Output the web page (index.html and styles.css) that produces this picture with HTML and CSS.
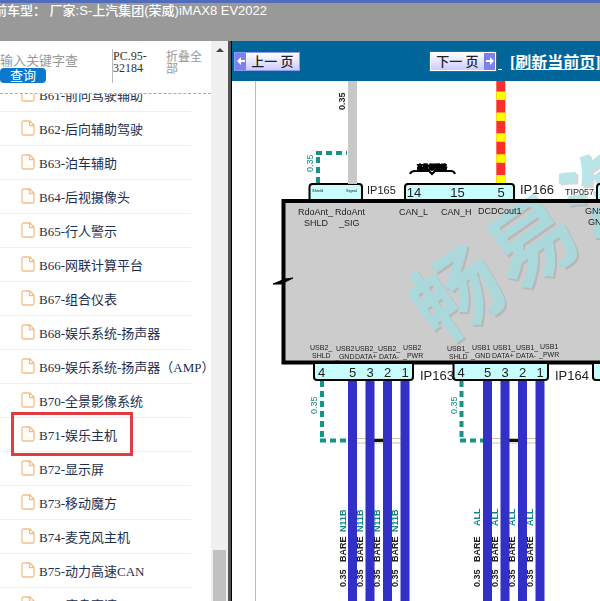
FILE: index.html
```html
<!DOCTYPE html>
<html lang="zh-CN">
<head>
<meta charset="utf-8">
<title>电路图</title>
<link rel="stylesheet" href="styles.css">
</head>
<body>
<svg class="defs" aria-hidden="true">
  <symbol id="doc" viewBox="0 0 14 16"><path d="M1 2.5Q1 1 2.5 1H9L13 5V13.5Q13 15 11.500 15H2.500Q1 15 1 13.500ZM8.500 1V5.500H13" fill="none" stroke="#f5bd85" stroke-width="1.300"/></symbol>
</svg>
<header class="top">前车型： 厂家:S-上汽集团(荣威)iMAX8 EV2022</header>
<div class="body">
  <aside class="side">
    <div class="panel">
      <form class="search">
        <div class="query">
          <input class="key" type="text" placeholder="输入关键字查" aria-label="关键字">
          <button class="go" type="button">查询</button>
        </div>
        <div class="code">PC.95-32184</div>
        <a class="fold" href="#">折叠全部</a>
      </form>
      <ul class="tree">
        <li><a href="#"><svg><use href="#doc"/></svg>B61-前向驾驶辅助</a></li>
        <li><a href="#"><svg><use href="#doc"/></svg>B62-后向辅助驾驶</a></li>
        <li><a href="#"><svg><use href="#doc"/></svg>B63-泊车辅助</a></li>
        <li><a href="#"><svg><use href="#doc"/></svg>B64-后视摄像头</a></li>
        <li><a href="#"><svg><use href="#doc"/></svg>B65-行人警示</a></li>
        <li><a href="#"><svg><use href="#doc"/></svg>B66-网联计算平台</a></li>
        <li><a href="#"><svg><use href="#doc"/></svg>B67-组合仪表</a></li>
        <li><a href="#"><svg><use href="#doc"/></svg>B68-娱乐系统-扬声器</a></li>
        <li><a href="#"><svg><use href="#doc"/></svg>B69-娱乐系统-扬声器（AMP）</a></li>
        <li><a href="#"><svg><use href="#doc"/></svg>B70-全景影像系统</a></li>
        <li class="marked"><a href="#"><svg><use href="#doc"/></svg>B71-娱乐主机</a></li>
        <li><a href="#"><svg><use href="#doc"/></svg>B72-显示屏</a></li>
        <li><a href="#"><svg><use href="#doc"/></svg>B73-移动魔方</a></li>
        <li><a href="#"><svg><use href="#doc"/></svg>B74-麦克风主机</a></li>
        <li><a href="#"><svg><use href="#doc"/></svg>B75-动力高速CAN</a></li>
        <li><a href="#"><svg><use href="#doc"/></svg>B76-底盘高速CAN</a></li>
      </ul>
    </div>
    <div class="bar"><i class="up"></i><i class="thumb"></i></div>
  </aside>
  <main class="main">
    <nav class="tools">
      <button class="page" type="button"><span class="arrow"><svg viewBox="0 0 8 8"><path d="M0 4L4 0V3H8V5H4V8Z"/></svg></span><span class="label">上一 页</span></button>
      <button class="page next" type="button"><span class="label">下一 页</span><span class="arrow"><svg viewBox="0 0 8 8"><path d="M8 4L4 0V3H0V5H4V8Z"/></svg></span></button>
      <i class="dash"></i>
      <a class="reload" href="#">[刷新当前页]</a>
    </nav>
    <svg class="diagram" viewBox="232 81 368 520" preserveAspectRatio="xMinYMin slice">
      <path d="M255.500 81V601" stroke="#bbb"/>
      <rect x="283.500" y="201" width="400" height="161.500" fill="#ccc"/>
      <g class="mark">
        <text class="shade" transform="translate(459 296) rotate(-35)" dy="32">畅</text>
        <text class="shade" transform="translate(534 244) rotate(-35)" dy="32">易</text>
        <text class="shade" transform="translate(610 192) rotate(-35)" dy="32">汽</text>
        <text transform="translate(457 294) rotate(-35)" dy="32">畅</text>
        <text transform="translate(532 242) rotate(-35)" dy="32">易</text>
        <text transform="translate(608 190) rotate(-35)" dy="32">汽</text>
      </g>
      <rect x="283.500" y="201" width="400" height="161.500" fill="none" stroke="#000" stroke-width="4"/>
      <path d="M273 284L285 279L293 278L281 284Z" fill="#000" stroke="#000"/>

      <g class="plug">
        <path d="M309.500 199V187Q309.500 184 312.500 184H359Q362 184 362 187V199"/>
        <path d="M405 199V187Q405 184 408 184H511Q514 184 514 187V199"/>
        <path d="M597 199V187Q597 184 600 184H620V199"/>
        <path d="M314 364V377Q314 380 317 380H410Q413 380 413 377V364"/>
        <path d="M453.500 364V377Q453.500 380 456.500 380H545Q548 380 548 377V364"/>
        <path d="M593 364V377Q593 380 596 380H620V364"/>
      </g>

      <path d="M352.500 81V184" stroke="#c8c8c8" stroke-width="9"/>
      <path d="M500.800 81V183" stroke="#fb302c" stroke-width="9"/>
      <path d="M500.800 91.500V183" stroke="#ffff00" stroke-width="9" stroke-dasharray="8.500 12.400"/>
      <g class="shield">
        <path d="M318 183V153"/>
        <path d="M316 153H347"/>
        <path d="M322 381V441"/>
        <path d="M320 440.500H349"/>
        <path d="M461.500 381V441"/>
        <path d="M460 440.500H484"/>
      </g>
      <g stroke="#c9c4a0" fill="none">
        <path d="M357 438.500H401M357 443H401M492 438.500H536M492 443H536"/>
        <path d="M373 440.500H384M508 440.500H519" stroke="#111" stroke-width="3"/>
      </g>
      <path class="wire" d="M352.500 381V601M370 381V601M387.500 381V601M405 381V601M487.500 381V601M505 381V601M522.500 381V601M540 381V601"/>
      <path d="M410 174Q411 171 415 171H429L432 174L435 171H451Q454 171 455 174" fill="none" stroke="#000" stroke-width="2"/>
      <text class="tiny bold" x="417" y="169">高数据链路</text>

      <g class="name">
        <text class="near" x="367" y="194">IP165</text>
        <text x="520" y="194">IP166</text>
        <text x="420" y="380">IP163</text>
        <text x="555" y="380">IP164</text>
        <text class="pin" x="565" y="195">TIP057</text>
      </g>
      <g class="num">
        <text x="414" y="197">14</text><text x="457.500" y="197">15</text><text x="501" y="197">5</text>
        <text x="321.500" y="377">4</text><text x="352.500" y="377">5</text><text x="370" y="377">3</text><text x="387.500" y="377">2</text><text x="405" y="377">1</text>
        <text x="461" y="377">4</text><text x="487.500" y="377">5</text><text x="505" y="377">3</text><text x="522.500" y="377">2</text><text x="540" y="377">1</text>
      </g>
      <g class="pin">
        <text x="298" y="215">RdoAnt_</text><text x="304" y="226">SHLD</text>
        <text x="335" y="215">RdoAnt</text><text x="339" y="226">_SIG</text>
        <text x="399" y="215">CAN_L</text><text x="441" y="215">CAN_H</text><text x="478" y="214">DCDCout1</text>
        <text x="585" y="214">GNSS</text><text x="588" y="225">GND</text>
      </g>
      <g class="small">
        <text x="310" y="350">USB2_</text><text x="312" y="358">SHLD</text>
        <text x="336" y="351">USB2</text><text x="335" y="359">_GND</text>
        <text x="355" y="351">USB2_</text><text x="355" y="359">DATA+</text>
        <text x="378" y="351">USB2_</text><text x="379" y="359">DATA-</text>
        <text x="403" y="350">USB2</text><text x="403" y="358">_PWR</text>
        <text x="447" y="351">USB1_</text><text x="449" y="359">SHLD</text>
        <text x="472" y="350">USB1</text><text x="471" y="358">_GND</text>
        <text x="493" y="350">USB1_</text><text x="492" y="358">DATA+</text>
        <text x="516" y="350">USB1_</text><text x="516" y="358">DATA-</text>
        <text x="540" y="349">USB1</text><text x="539" y="357">_PWR</text>
      </g>
      <text class="tiny" x="312" y="192">Shield</text><text class="tiny" x="346" y="192">Signal</text>

      <g class="gauge">
        <text class="bold" transform="translate(345 110) rotate(-90)">0.35</text>
        <text class="teal" transform="translate(313 172) rotate(-90)">0.35</text>
        <text class="teal" transform="translate(317 414) rotate(-90)">0.35</text>
        <text class="teal" transform="translate(457 414) rotate(-90)">0.35</text>
      </g>
      <g class="gauge bold">
        <text transform="translate(346 587) rotate(-90)">0.35</text><text transform="translate(346 562) rotate(-90)">BARE</text><text class="teal" transform="translate(346 532) rotate(-90)">N11B</text>
        <text transform="translate(363 587) rotate(-90)">0.35</text><text transform="translate(363 562) rotate(-90)">BARE</text><text class="teal" transform="translate(363 532) rotate(-90)">N11B</text>
        <text transform="translate(380 587) rotate(-90)">0.35</text><text transform="translate(380 562) rotate(-90)">BARE</text><text class="teal" transform="translate(380 532) rotate(-90)">N11B</text>
        <text transform="translate(398 587) rotate(-90)">0.35</text><text transform="translate(398 562) rotate(-90)">BARE</text><text class="teal" transform="translate(398 532) rotate(-90)">N11B</text>
        <text transform="translate(480 587) rotate(-90)">0.35</text><text transform="translate(480 562) rotate(-90)">BARE</text><text class="teal" transform="translate(480 526) rotate(-90)">ALL</text>
        <text transform="translate(498 587) rotate(-90)">0.35</text><text transform="translate(498 562) rotate(-90)">BARE</text><text class="teal" transform="translate(498 526) rotate(-90)">ALL</text>
        <text transform="translate(515 587) rotate(-90)">0.35</text><text transform="translate(515 562) rotate(-90)">BARE</text><text class="teal" transform="translate(515 526) rotate(-90)">ALL</text>
        <text transform="translate(533 587) rotate(-90)">0.35</text><text transform="translate(533 562) rotate(-90)">BARE</text><text class="teal" transform="translate(533 526) rotate(-90)">ALL</text>
      </g>
    </svg>
  </main>
</div>
</body>
</html>
```
FILE: styles.css
```css
*, *::before, *::after { box-sizing: border-box; }
body {
  margin: 0;
  height: 100vh;
  display: flex;
  flex-direction: column;
  overflow: hidden;
  background: #fff;
  font-family: "Liberation Serif", "Noto Sans CJK SC", serif;
  font-size: 13px;
}
a { color: inherit; text-decoration: none; }
button, input { font: inherit; border: 0; padding: 0; }
.defs { display: none; }

.top {
  flex: none;
  height: 41px;
  border-top: 3px solid #4f6dbb;
  background: #999;
  color: #fff;
  font: 500 13px/15px "Liberation Sans", "Noto Sans CJK SC", sans-serif;
  text-indent: -6px;
  white-space: nowrap;
}

.body { flex: 1; min-height: 0; display: flex; }

.side {
  flex: none;
  width: 231px;
  display: flex;
  border-right: 3px solid #555;
  background: #fff;
}
.panel {
  flex: 1;
  min-width: 0;
  display: flex;
  flex-direction: column;
}
.search {
  flex: none;
  height: 53px;
  display: flex;
  align-items: flex-start;
  padding-top: 8px;
  border-bottom: 1px dashed #aaa;
}
.query {
  width: 112px;
  padding-top: 4px;
  display: flex;
  flex-direction: column;
  align-items: flex-start;
}
.key { width: 80px; height: 15px; background: none; color: #333; }
.key::placeholder { color: #999; }
.go {
  width: 46px;
  height: 15px;
  border-radius: 4px;
  background: #0a78cc;
  color: #fff;
  line-height: 15px;
}
.code {
  width: 54px;
  height: 34px;
  padding-top: 1px;
  border-left: 1px solid #bbb;
  color: #333;
  font-size: 12px;
  line-height: 12px;
  overflow-wrap: anywhere;
}
.fold { width: 40px; padding-top: 2px; color: #999; font-size: 12px; line-height: 12px; }

.tree {
  flex: 1;
  min-height: 0;
  margin: 0;
  padding: 0;
  list-style: none;
  display: flex;
  flex-direction: column;
  overflow: hidden;
}
.tree li {
  position: relative;
  flex: none;
  width: 191px;
  height: 34px;
  border-bottom: 1px solid #eee;
}
.tree li:first-child { margin-top: -16px; }
.tree a {
  display: flex;
  align-items: center;
  gap: 4px;
  height: 32px;
  padding-left: 21px;
  color: #1c2f50;
  white-space: nowrap;
}
.tree svg { width: 14px; height: 16px; flex: none; }
.marked::after {
  content: "";
  position: absolute;
  left: 11px;
  top: -6px;
  width: 122px;
  height: 44px;
  z-index: 1;
  border: 3px solid #e13c40;
}

.bar {
  width: 17px;
  flex: none;
  display: flex;
  flex-direction: column;
  justify-content: space-between;
  align-items: center;
  padding-top: 7px;
  background: #f0f0f0;
}
.up {
  border: 4px solid transparent;
  border-top: 0;
  border-bottom: 4px solid #444;
}
.thumb { width: 13px; height: 51px; background: #c1c1c1; }

.main {
  flex: 1;
  min-width: 0;
  display: flex;
  flex-direction: column;
  border-left: 1px solid #000;
}
.tools {
  flex: none;
  height: 40px;
  display: flex;
  align-items: center;
  padding-left: 2px;
  background: #069;
  color: #fff;
  overflow: hidden;
}
.page {
  flex: none;
  display: flex;
  height: 19px;
  width: 66px;
  border: 1px solid #8e9cf0;
  background: linear-gradient(#fff, #c9cbff);
  color: #222;
}
.label { flex: 1; line-height: 17px; white-space: nowrap; font-weight: 500; }
.arrow {
  width: 11px;
  height: 17px;
  display: flex;
  align-items: center;
  justify-content: center;
  background: #7b80ee;
}
.arrow svg { width: 8px; height: 8px; fill: #fff; }
.next { margin-left: 130px; border-color: #fff; outline: 1px solid #467; }
.dash { flex: none; width: 4px; height: 18px; margin-left: 2px; border-bottom: 1px solid #fff; }
.reload {
  margin-left: 8px;
  font-size: 16px;
  font-weight: bold;
  text-decoration: underline;
  white-space: nowrap;
}

.diagram {
  display: block;
  flex: 1;
  min-height: 0;
  width: 100%;
  font-family: "Liberation Sans", "Noto Sans CJK SC", sans-serif;
  fill: #222;
}
.mark { font-size: 88px; font-weight: 700; text-anchor: middle; fill: #a0dce0; opacity: 0.75; }
.shade { fill: #999; opacity: 0.5; }
.plug { fill: #c9fcfc; stroke: #000; stroke-width: 2; }
.shield { fill: none; stroke: #159488; stroke-width: 4; stroke-dasharray: 6 4; }
.wire { fill: none; stroke: #3330c8; stroke-width: 9; }
.name { font-size: 13px; }
.near { font-size: 11px; }
.num { font-size: 13px; text-anchor: middle; }
.pin { font-size: 9px; }
.small { font-size: 7px; }
.tiny { font-size: 4px; }
.tiny.bold { font-size: 6px; fill: #000; stroke: #000; }
.gauge { font-size: 9px; }
.bold { font-weight: bold; }
.teal { fill: #148488; }
```
